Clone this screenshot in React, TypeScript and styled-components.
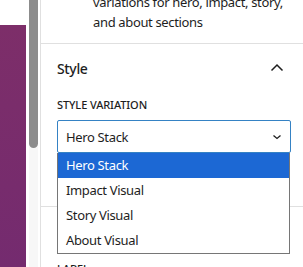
import styled, { createGlobalStyle } from 'styled-components'

const GlobalStyle = createGlobalStyle`
  html, body {
    margin: 0;
    padding: 0;
    background: #ffffff;
    overflow: hidden;
  }
  * {
    box-sizing: border-box;
  }
`

const Screen = styled.div`
  display: flex;
  width: 303px;
  height: 267px;
  font-family: 'Noto Sans', 'Open Sans', sans-serif;
  letter-spacing: -0.35px;
  color: #1e1e1e;
  background: #ffffff;
`

const CanvasEdge = styled.div`
  width: 29px;
  flex-shrink: 0;
  padding-top: 25px;
`

const CanvasBlock = styled.div`
  width: 26px;
  height: 100%;
  background: linear-gradient(180deg, #7d2e69 0%, #742b6f 100%);
`

const ScrollTrack = styled.div`
  width: 9px;
  flex-shrink: 0;
  background: #f7f7f7;
`

const ScrollThumb = styled.div`
  width: 9px;
  height: 148px;
  background: #8c8c8c;
  border-radius: 0 0 5px 5px;
`

const Sidebar = styled.aside`
  position: relative;
  flex: 1;
  margin-left: 2px;
  border-left: 1px solid #e0e0e0;
  overflow: hidden;
`

const Panel = styled.section<{ $padTop?: number }>`
  padding: ${({ $padTop }) => $padTop ?? 0}px 16px 0 16px;
  border-bottom: 1px solid #e0e0e0;
`

const Description = styled.p`
  margin: -8px 0 0 36px;
  padding-bottom: 11px;
  font-size: 13px;
  line-height: 20px;
  white-space: nowrap;
`

const PanelHeader = styled.div`
  display: flex;
  align-items: center;
  justify-content: space-between;
  height: 48px;
  font-size: 14px;
  font-weight: 500;
`

const Chevron = styled.svg`
  width: 24px;
  height: 24px;
  margin-right: -2px;
`

const FieldLabel = styled.div`
  padding-top: 5px;
  margin-bottom: 7px;
  font-size: 11px;
  line-height: 16px;
  font-weight: 500;
  text-transform: uppercase;
  letter-spacing: -0.1px;
`

const Field = styled.div`
  position: relative;
  padding-bottom: 53px;
`

const SelectBox = styled.div`
  display: flex;
  align-items: center;
  justify-content: space-between;
  width: 234px;
  height: 33px;
  padding: 0 5px 0 8px;
  border: 1px solid #3582c4;
  border-radius: 2px;
  font-size: 13px;
`

const SmallChevron = styled.svg`
  width: 16px;
  height: 16px;
`

const Options = styled.ul`
  position: absolute;
  top: 33px;
  left: 0;
  width: 233px;
  margin: 0;
  padding: 0;
  list-style: none;
  background: #ffffff;
  border: 1px solid #767676;
  border-top: none;
`

const Option = styled.li<{ $active?: boolean }>`
  height: 25px;
  padding-left: 8px;
  font-size: 13px;
  line-height: 25px;
  background: ${({ $active }) => ($active ? '#1c68d4' : 'transparent')};
  color: ${({ $active }) => ($active ? '#ffffff' : '#1e1e1e')};
`

export default function App() {
  const options = ['Hero Stack', 'Impact Visual', 'Story Visual', 'About Visual']

  return (
    <>
      <GlobalStyle />
      <Screen>
        <CanvasEdge>
          <CanvasBlock />
        </CanvasEdge>
        <ScrollTrack>
          <ScrollThumb />
        </ScrollTrack>
        <Sidebar>
          <Panel>
            <Description>
              variations for hero, impact, story,
              <br />
              and about sections
            </Description>
          </Panel>

          <Panel>
            <PanelHeader>
              Style
              <Chevron viewBox="0 0 24 24">
                <path d="M6.5 14.5 12 9l5.5 5.5" fill="none" stroke="#1e1e1e" strokeWidth="1.5" />
              </Chevron>
            </PanelHeader>
            <FieldLabel>Style Variation</FieldLabel>
            <Field>
              <SelectBox>
                Hero Stack
                <SmallChevron viewBox="0 0 16 16">
                  <path d="M4.5 6.5 8 9.5l3.5-3" fill="none" stroke="#1e1e1e" strokeWidth="1.3" />
                </SmallChevron>
              </SelectBox>
              <Options>
                {options.map((o, i) => (
                  <Option key={o} $active={i === 0}>
                    {o}
                  </Option>
                ))}
              </Options>
            </Field>
          </Panel>

          <Panel $padTop={49}>
            <FieldLabel>Label</FieldLabel>
          </Panel>
        </Sidebar>
      </Screen>
    </>
  )
}
